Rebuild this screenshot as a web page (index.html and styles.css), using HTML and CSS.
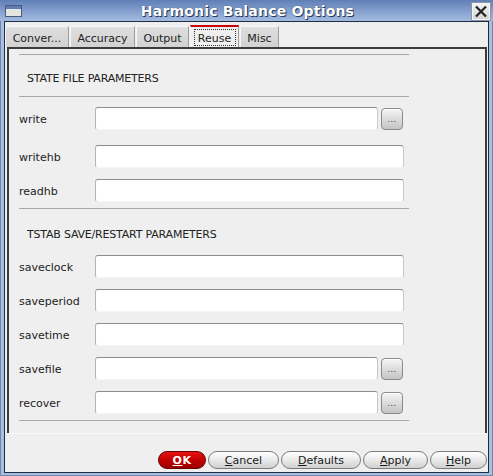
FILE: index.html
```html
<!DOCTYPE html>
<html>
<head>
<meta charset="utf-8">
<link rel="stylesheet" href="styles.css">
</head>
<body>
<div class="window">
  <div class="titlebar">
    <svg class="winicon" width="17" height="12" viewBox="0 0 17 12">
      <rect x="0.5" y="0.5" width="16" height="11" fill="#e4e4e0" stroke="#4a5a78"/>
      <rect x="1" y="1" width="15" height="3" fill="#5f7fb4"/>
    </svg>
    <div class="title">Harmonic Balance Options</div>
    <div class="closebtn">
      <svg width="16" height="15" viewBox="0 0 16 15">
        <path d="M3 2.5 L13 12.5 M13 2.5 L3 12.5" stroke="#222" stroke-width="2.2" fill="none"/>
      </svg>
    </div>
  </div>
  <div class="frame">
    <div class="client">
      <div class="tabs">
        <div class="tab t1">Conver...</div>
        <div class="tab t2">Accuracy</div>
        <div class="tab t3">Output</div>
        <div class="tab t4 active"><span class="focus">Reuse</span></div>
        <div class="tab t5">Misc</div>
      </div>
      <div class="panel">
        <div class="sep"></div>
        <div class="heading h1">STATE FILE PARAMETERS</div>
        <div class="sep"></div>
        <div class="rows rows1">
          <div class="row">
            <span class="label">write</span>
            <span class="input short"></span>
            <span class="browse">...</span>
          </div>
          <div class="row r2">
            <span class="label">writehb</span>
            <span class="input"></span>
          </div>
          <div class="row r3">
            <span class="label">readhb</span>
            <span class="input"></span>
          </div>
        </div>
        <div class="sep"></div>
        <div class="heading h2">TSTAB SAVE/RESTART PARAMETERS</div>
        <div class="rows rows2">
          <div class="row">
            <span class="label">saveclock</span>
            <span class="input"></span>
          </div>
          <div class="row">
            <span class="label">saveperiod</span>
            <span class="input"></span>
          </div>
          <div class="row">
            <span class="label">savetime</span>
            <span class="input"></span>
          </div>
          <div class="row">
            <span class="label">savefile</span>
            <span class="input short"></span>
            <span class="browse">...</span>
          </div>
          <div class="row">
            <span class="label">recover</span>
            <span class="input short"></span>
            <span class="browse">...</span>
          </div>
        </div>
        <div class="sep"></div>
      </div>
      <div class="footer">
        <div class="btn ok"><u>O</u>K</div>
        <div class="btn cancel"><u>C</u>ancel</div>
        <div class="btn defaults"><u>D</u>efaults</div>
        <div class="btn apply"><u>A</u>pply</div>
        <div class="btn help"><u>H</u>elp</div>
      </div>
    </div>
  </div>
</div>
</body>
</html>
```
FILE: styles.css
```css
html, body {
  margin: 0;
  padding: 0;
  background: #a9bfe2;
}
body {
  width: 493px;
  height: 476px;
  overflow: hidden;
  font-family: "DejaVu Sans", "Liberation Sans", sans-serif;
  font-size: 11px;
  color: #1e1e1e;
}
.window {
  width: 493px;
  height: 476px;
  display: flex;
  flex-direction: column;
  box-sizing: border-box;
  border: 1px solid #6f86ad;
  border-top: none;
}
.titlebar {
  height: 21px;
  flex: none;
  position: relative;
  display: flex;
  align-items: center;
  justify-content: center;
  background: linear-gradient(#5f7fb6, #86a1cf 55%, #a3bbe0);
  margin: 0 -1px;
}
.winicon {
  position: absolute;
  left: 5px;
  top: 5px;
}
.title {
  font-family: "DejaVu Sans", sans-serif;
  font-weight: bold;
  font-size: 14px;
  color: #fff;
  letter-spacing: 0.2px;
  text-shadow: 1px 1px 0 #2a3a58, 0 0 1px #2a3a58;
  margin-left: 2px;
}
.closebtn {
  position: absolute;
  right: 3px;
  top: 3px;
  width: 16px;
  height: 15px;
  border: 1px solid #f4f4f4;
  outline: 1px solid #8a96a8;
  background: linear-gradient(#f2f2f2, #d4d4d4);
  display: flex;
  align-items: center;
  justify-content: center;
}
.frame {
  flex: 1;
  display: flex;
  padding: 0 3px 2px 3px;
}
.client {
  flex: 1;
  display: flex;
  flex-direction: column;
  background: #efefef;
  border: 1px solid #1f2c45;
}
.tabs {
  height: 25px;
  display: flex;
  align-items: flex-end;
  flex: none;
}
.tab {
  height: 21px;
  box-sizing: border-box;
  background: linear-gradient(#dedede, #d2d2d2);
  border-top: 1px solid #f6f6f6;
  border-left: 1px solid #f6f6f6;
  border-right: 1px solid #9e9e9e;
  display: flex;
  align-items: center;
  justify-content: center;
  padding-top: 3px;
  margin-right: 1px;
  color: #222;
}
.t1 { width: 64px; }
.t2 { width: 65px; }
.t3 { width: 53px; }
.t4 { width: 49px; }
.t5 { width: 39px; }
.tab.active {
  height: 22px;
  background: #efefef;
  border-top: 2px solid #cc0000;
  padding-top: 1px;
}
.focus {
  border: 1px dotted #333;
  width: 42px;
  height: 17px;
  box-sizing: border-box;
  display: flex;
  align-items: center;
  justify-content: center;
  padding-top: 1px;
}
.panel {
  flex: none;
  margin: 0 1px 0 2px;
  border: 2px solid #3c3c3c;
  border-bottom: none;
  padding: 5px 0 12px 10px;
  background: #efefef;
  box-shadow: 0 1px 0 #fafafa;
}
.sep {
  width: 390px;
  height: 1px;
  background: #a8a8a8;
}
.heading {
  line-height: 14px;
  padding-left: 8px;
  color: #222;
  letter-spacing: -0.2px;
}
.h1 {
  padding-top: 17px;
  padding-bottom: 10px;
}
.h2 {
  padding-top: 19px;
  padding-bottom: 13px;
}
.rows {
  display: flex;
  flex-direction: column;
}
.rows1 {
  padding-top: 10px;
  padding-bottom: 6px;
}
.rows1 .r2 { margin-top: 15px; }
.rows1 .r3 { margin-top: 11px; }
.rows2 {
  gap: 11px;
  padding-bottom: 6px;
}
.row {
  height: 23px;
  display: flex;
  align-items: center;
}
.label {
  width: 76px;
  flex: none;
  color: #222;
  padding-top: 2px;
}
.input {
  width: 309px;
  height: 23px;
  box-sizing: border-box;
  background: #fff;
  border: 1px solid #c8c8c8;
  border-top-color: #8c8c8c;
  border-left-color: #b4b4b4;
  border-bottom-color: #f4f4f4;
  border-radius: 3px;
}
.input.short {
  width: 283px;
}
.browse {
  width: 22px;
  height: 22px;
  box-sizing: border-box;
  margin-left: 3px;
  margin-top: 1px;
  border: 1px solid #8a8a8a;
  border-radius: 4px;
  background: linear-gradient(#f6f6f6, #dcdcdc 50%, #c4c4c4);
  box-shadow: inset 0 1px 0 #fff;
  font-size: 8px;
  line-height: 8px;
  color: #333;
  display: flex;
  align-items: flex-end;
  justify-content: center;
  padding-bottom: 5px;
  letter-spacing: 0.5px;
}
.footer {
  flex: 1;
  display: flex;
  justify-content: flex-end;
  align-items: flex-end;
  gap: 2px;
  padding: 0 1px 3px 0;
}
.btn {
  height: 18px;
  box-sizing: border-box;
  border: 1px solid #7a7a7a;
  border-radius: 9px;
  background: linear-gradient(#ffffff, #ececec 45%, #d0d0d0);
  display: flex;
  align-items: center;
  justify-content: center;
  color: #1a1a1a;
  padding-top: 1px;
}
.btn u {
  text-decoration-thickness: 1px;
  text-underline-offset: 1px;
}
.ok {
  width: 48px;
  background: linear-gradient(#e41414, #c40000 50%, #9a0000);
  border-color: #6a0000;
  color: #fff;
  font-weight: bold;
  letter-spacing: 0.5px;
}
.cancel { width: 71px; }
.defaults { width: 80px; }
.apply { width: 65px; }
.help { width: 57px; }
```
